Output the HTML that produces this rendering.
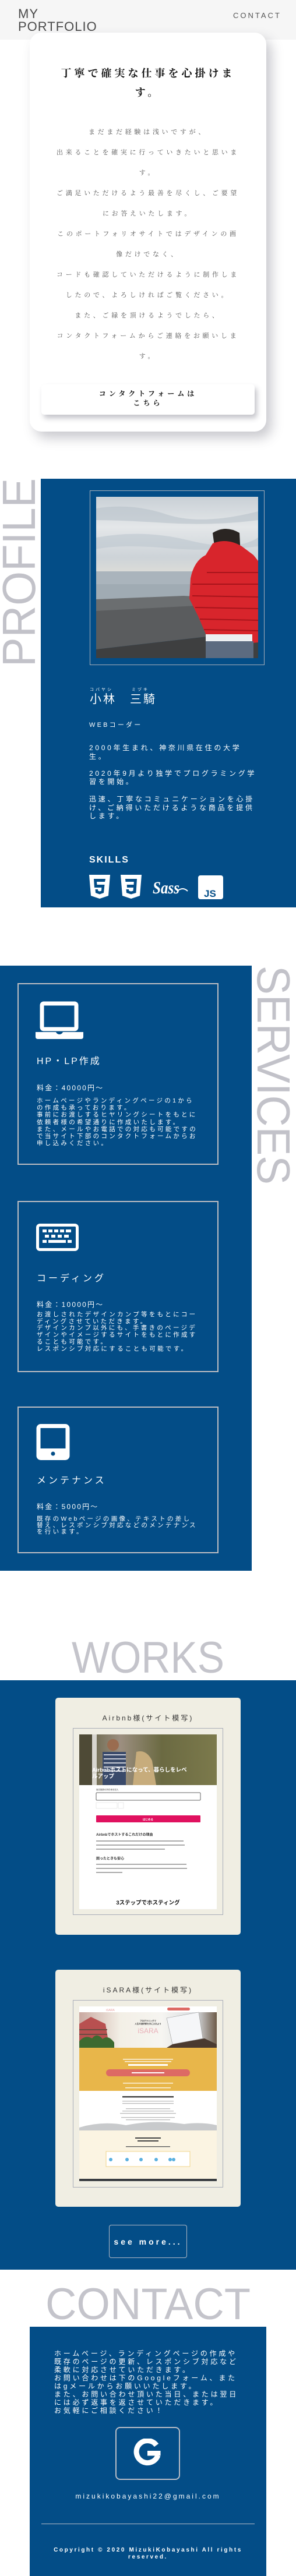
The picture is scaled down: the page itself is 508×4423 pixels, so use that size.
<!DOCTYPE html>
<html><head><meta charset="utf-8">
<style>
*{margin:0;padding:0;box-sizing:border-box}
html,body{width:508px;height:4423px;background:#fff;overflow:hidden}
body{position:relative;font-family:"Liberation Sans","Noto Sans CJK JP",sans-serif}
.a{position:absolute}
.nw{white-space:nowrap}
.serif{font-family:"Liberation Serif","Noto Serif CJK JP",serif}
.w{color:#fff}
.blue{background:#034d87}
.card{border:2px solid #bdbdc2}
</style></head><body>

<!-- HEADER -->
<div class="a" style="left:0;top:0;width:508px;height:68px;background:#f6f6f6"></div>
<div class="a nw" style="left:31px;top:13px;font-size:22px;line-height:22px;letter-spacing:1px;color:#4a4a4a">MY<br>PORTFOLIO</div>
<div class="a nw" style="left:400px;top:19px;font-size:13px;line-height:16px;letter-spacing:3px;color:#555">CONTACT</div>

<!-- INTRO CARD -->
<div class="a" style="left:51px;top:56px;width:406px;height:685px;background:#fff;border-radius:20px;box-shadow:9px 11px 20px rgba(60,60,80,0.28)"></div>
<div class="a nw serif" style="left:51px;width:406px;top:110px;text-align:center;font-size:18px;font-weight:bold;line-height:33px;letter-spacing:5px;color:#111">丁寧で確実な仕事を心掛けま<br>す。</div>
<div class="a nw serif" style="left:51px;width:406px;top:209.5px;text-align:center;font-size:11px;line-height:35px;letter-spacing:4.7px;color:#555">まだまだ経験は浅いですが、<br>出来ることを確実に行っていきたいと思いま<br>す。<br>ご満足いただけるよう最善を尽くし、ご要望<br>にお答えいたします。<br>このポートフォリオサイトではデザインの画<br>像だけでなく、<br>コードも確認していただけるように制作しま<br>したので、よろしければご覧ください。<br>また、ご縁を頂けるようでしたら、<br>コンタクトフォームからご連絡をお願いしま<br>す。</div>
<div class="a" style="left:71px;top:660px;width:366px;height:52px;background:#fff;border-radius:5px;box-shadow:4px 6px 9px rgba(60,60,80,0.3)"></div>
<div class="a nw serif" style="left:71px;width:366px;top:668px;text-align:center;font-size:12px;line-height:16px;letter-spacing:5px;color:#111;font-weight:bold">コンタクトフォームは<br>こちら</div>

<!-- PROFILE -->
<svg class="a" style="left:0;top:0" width="508" height="4423">
<text transform="translate(60,1145) rotate(-90)" font-family="Liberation Sans" font-size="80" fill="#c2c2c9" textLength="324" lengthAdjust="spacingAndGlyphs">PROFILE</text>
<text transform="translate(442,1658) rotate(90)" font-family="Liberation Sans" font-size="80" fill="#c2c2c9" textLength="376" lengthAdjust="spacingAndGlyphs">SERVICES</text>
<text x="123" y="2872" font-family="Liberation Sans" font-size="76" fill="#c4c4cb" textLength="262" lengthAdjust="spacingAndGlyphs">WORKS</text>
<text x="78" y="3982" font-family="Liberation Sans" font-size="76" fill="#c4c4cb" textLength="352" lengthAdjust="spacingAndGlyphs">CONTACT</text>
</svg>
<div class="a blue" style="left:70px;top:822px;width:438px;height:736px"></div>
<div class="a" style="left:154px;top:842px;width:300px;height:300px;border:1px solid #a9b0ba"></div>
<svg class="a" style="left:165px;top:853px" width="278" height="277" viewBox="0 0 278 277">
<defs><linearGradient id="sky" x1="0" y1="0" x2="0" y2="1"><stop offset="0" stop-color="#c9d0d6"/><stop offset="0.4" stop-color="#e4e7e9"/><stop offset="0.8" stop-color="#cdd3d8"/><stop offset="1" stop-color="#dcdcd8"/></linearGradient></defs>
<rect width="278" height="130" fill="url(#sky)"/>
<path d="M0 20 Q60 10 120 30 T278 25 L278 40 Q200 50 120 45 T0 40Z" fill="#b7c1ca" opacity="0.6"/>
<path d="M0 70 Q80 55 160 75 T278 70 L278 85 Q200 95 120 88 T0 90Z" fill="#bcc6ce" opacity="0.6"/>
<rect y="128" width="278" height="52" fill="#aab4bc"/>
<rect y="150" width="278" height="30" fill="#9aa5ae" opacity="0.6"/>
<path d="M0 186 L150 176 L278 178 L278 230 L0 262Z" fill="#5a5c5e"/>
<path d="M0 176 L150 170 L190 172 L190 186 L0 196Z" fill="#6b6e70"/>
<path d="M0 262 L278 230 L278 277 L0 277Z" fill="#3e3f40"/>
<path d="M200 62 Q222 48 246 62 L248 100 L205 100Z" fill="#2a2522"/>
<path d="M162 140 Q168 110 188 100 L200 80 Q225 70 250 85 L270 100 L278 110 L278 250 L230 255 L190 240 L175 205 L160 175Z" fill="#d8252c"/>
<path d="M165 150 L278 150 M165 170 L278 172 M170 190 L278 192 M178 210 L278 212 M185 228 L278 230 M190 130 L278 130" stroke="#a8141b" stroke-width="2" fill="none"/>
<rect x="188" y="236" width="80" height="12" fill="#eceff2"/>
<rect x="188" y="248" width="82" height="29" fill="#5c6b80"/>
</svg>
<div class="a nw w" style="left:154px;top:1180px;font-size:7px;line-height:10px;letter-spacing:3px">コバヤシ</div>
<div class="a nw w" style="left:226px;top:1180px;font-size:7px;line-height:10px;letter-spacing:3px">ミヅキ</div>
<div class="a nw w" style="left:154px;top:1189px;font-size:20px;line-height:24px;letter-spacing:3px">小林　三騎</div>
<div class="a nw w" style="left:153px;top:1238px;font-size:11px;line-height:14px;letter-spacing:3.2px">WEBコーダー</div>
<div class="a nw w" style="left:153px;top:1277px;font-size:12px;line-height:14.5px;letter-spacing:3.7px">2000年生まれ、神奈川県在住の大学<br>生。</div>
<div class="a nw w" style="left:153px;top:1321px;font-size:12px;line-height:14px;letter-spacing:3.7px">2020年9月より独学でプログラミング学<br>習を開始。</div>
<div class="a nw w" style="left:153px;top:1365px;font-size:12px;line-height:14.5px;letter-spacing:3.8px">迅速、丁寧なコミュニケーションを心掛<br>け、ご納得いただけるような商品を提供<br>します。</div>
<div class="a nw w" style="left:153px;top:1467px;font-size:16px;line-height:20px;letter-spacing:2px;font-weight:bold">SKILLS</div>
<svg class="a" style="left:150px;top:1500px" width="240" height="50" viewBox="0 0 240 50">
<path d="M3 2 H39 L36 38 L21 43 L6 38Z" fill="#fff"/>
<path d="M11 9 H31 L30 14 H16 L16.5 19 H29.5 L28 33 L21 35.5 L14 33 L13.5 27 H18 L18.3 29.5 L21 30.5 L24 29.5 L24.4 24 H12Z" fill="#034d87"/>
<path d="M57 2 H93 L90 38 L75 43 L60 38Z" fill="#fff"/>
<path d="M65 9 H85 L83.5 33 L75 35.5 L67 33 L66.5 27 H71 L71.3 29.5 L75 30.5 L78.5 29.5 L79 24 H68 L67.7 19 H79.5 L79.8 14 H65.5Z" fill="#034d87"/>
<text x="112" y="34" font-family="Liberation Serif" font-style="italic" font-weight="bold" font-size="30" fill="#fff" textLength="46" lengthAdjust="spacingAndGlyphs">Sass</text>
<path d="M154 30 Q164 22 172 30" stroke="#fff" stroke-width="2" fill="none"/>
<rect x="190" y="3" width="43" height="41" rx="4" fill="#fff"/>
<text x="200" y="40" font-family="Liberation Sans" font-weight="bold" font-size="17" fill="#034d87">JS</text>
</svg>

<!-- SERVICES -->
<div class="a blue" style="left:0;top:1658px;width:432px;height:1039px"></div>
<div class="a card" style="left:30px;top:1688px;width:345px;height:312px"></div>
<div class="a card" style="left:30px;top:2062px;width:345px;height:294px"></div>
<div class="a card" style="left:30px;top:2415px;width:345px;height:252px"></div>
<svg class="a" style="left:60px;top:1718px" width="86" height="70">
<rect x="12" y="5" width="59" height="44" rx="3" fill="none" stroke="#fff" stroke-width="7"/>
<path d="M1 54 H36 Q38 58 42 58 Q46 58 48 54 H83 V62 Q83 66 79 66 H5 Q1 66 1 62Z" fill="#fff"/>
</svg>
<svg class="a" style="left:60px;top:2099px" width="78" height="52">
<rect x="4.5" y="4.5" width="68" height="42" rx="4" fill="none" stroke="#fff" stroke-width="5"/>
<g fill="#fff"><rect x="13" y="12" width="7" height="5"/><rect x="23" y="12" width="7" height="5"/><rect x="33" y="12" width="7" height="5"/><rect x="43" y="12" width="7" height="5"/><rect x="53" y="12" width="9" height="5"/>
<rect x="17" y="21" width="7" height="5"/><rect x="28" y="21" width="7" height="5"/><rect x="39" y="21" width="7" height="5"/><rect x="50" y="21" width="8" height="5"/>
<rect x="13" y="30" width="7" height="5"/><rect x="23" y="30" width="30" height="5"/><rect x="56" y="30" width="7" height="5"/></g>
</svg>
<svg class="a" style="left:60px;top:2443px" width="62" height="66">
<rect x="6" y="5.5" width="50" height="55" rx="4" fill="none" stroke="#fff" stroke-width="7"/>
<rect x="6" y="44" width="50" height="17" rx="3" fill="#fff"/>
<circle cx="31" cy="53" r="3.5" fill="#034d87"/>
</svg>

<div class="a nw w" style="left:63px;top:1812px;font-size:16px;line-height:22px;letter-spacing:3px">HP・LP作成</div>
<div class="a nw w" style="left:63px;top:1860px;font-size:12px;line-height:16px;letter-spacing:2.2px">料金：40000円〜</div>
<div class="a nw w" style="left:63px;top:1884px;font-size:10.5px;line-height:12.2px;letter-spacing:3.3px">ホームページやランディングページの1から<br>の作成も承っております。<br>事前にお渡しするヒヤリングシートをもとに<br>依頼者様の希望通りに作成いたします。<br>また、メールやお電話での対応も可能ですの<br>で当サイト下部のコンタクトフォームからお<br>申し込みください。</div>

<div class="a nw w" style="left:63px;top:2185px;font-size:16px;line-height:22px;letter-spacing:4px">コーディング</div>
<div class="a nw w" style="left:63px;top:2232px;font-size:12px;line-height:16px;letter-spacing:2.2px">料金：10000円〜</div>
<div class="a nw w" style="left:63px;top:2252px;font-size:10.5px;line-height:11.7px;letter-spacing:3.3px">お渡しされたデザインカンプ等をもとにコー<br>ディングさせていただきます。<br>デザインカンプ以外にも、手書きのページデ<br>ザインやイメージするサイトをもとに作成す<br>ることも可能です。<br>レスポンシブ対応にすることも可能です。</div>

<div class="a nw w" style="left:63px;top:2532px;font-size:16px;line-height:22px;letter-spacing:4px">メンテナンス</div>
<div class="a nw w" style="left:63px;top:2579px;font-size:12px;line-height:16px;letter-spacing:2.2px">料金：5000円〜</div>
<div class="a nw w" style="left:63px;top:2603px;font-size:10.5px;line-height:11px;letter-spacing:3.3px">既存のWebページの画像、テキストの差し<br>替え、レスポンシブ対応などのメンテナンス<br>を行います。</div>

<!-- WORKS -->
<div class="a blue" style="left:0;top:2885px;width:508px;height:1012px"></div>
<div class="a" style="left:95px;top:2915px;width:318px;height:407px;background:#f0eee3;border-radius:5px"></div>
<div class="a nw" style="left:95px;width:318px;top:2942px;text-align:center;font-size:12px;line-height:16px;letter-spacing:3px;color:#333">Airbnb様(サイト模写)</div>
<div class="a" style="left:125px;top:2967px;width:258px;height:321px;border:1px solid #a9adb8"></div>
<svg class="a" style="left:136px;top:2978px" width="236" height="300" viewBox="0 0 236 300">
<defs><linearGradient id="ph" x1="0" y1="0" x2="1" y2="0"><stop offset="0" stop-color="#5a5a3c"/><stop offset="0.3" stop-color="#9c8f80"/><stop offset="0.6" stop-color="#6b6a42"/><stop offset="1" stop-color="#7c7a4c"/></linearGradient></defs>
<rect width="236" height="300" fill="#fff"/>
<rect width="236" height="87" fill="url(#ph)"/>
<rect x="0" y="0" width="22" height="87" fill="#4e4a36"/>
<rect x="22" y="0" width="8" height="87" fill="#d8d6d0"/>
<rect x="40" y="30" width="40" height="57" fill="#3a4a6a"/>
<path d="M42 35 H80 M42 42 H80 M42 49 H80 M42 56 H80 M42 63 H80" stroke="#c8ccd6" stroke-width="2"/>
<circle cx="58" cy="18" r="10" fill="#9a6c50"/>
<path d="M98 30 Q115 25 125 45 L132 87 H92Z" fill="#c7ac7c"/>
<text x="22" y="64" font-family="Liberation Sans, Noto Sans CJK JP, sans-serif" font-weight="bold" font-size="9.5" fill="#fff">Airbnbホストになって、暮らしをレベ</text>
<text x="22" y="75" font-family="Liberation Sans, Noto Sans CJK JP, sans-serif" font-weight="bold" font-size="9.5" fill="#fff">ルアップ</text>
<text x="29" y="96" font-family="Noto Sans CJK JP, sans-serif" font-size="3.5" fill="#444">宿泊施設の所在地を記入</text>
<rect x="29" y="100" width="179" height="13" rx="1.5" fill="#fff" stroke="#666" stroke-width="1"/>
<rect x="29" y="117" width="36" height="10" fill="#fff" stroke="#ddd" stroke-width="0.6"/>
<rect x="67" y="117" width="9" height="10" fill="#fff" stroke="#ddd" stroke-width="0.6"/>
<rect x="29" y="139" width="179" height="12" rx="1" fill="#e0115f"/>
<text x="118" y="147.5" text-anchor="middle" font-family="Noto Sans CJK JP, sans-serif" font-weight="bold" font-size="4.5" fill="#fff">はじめる</text>
<text x="29" y="174" font-family="Liberation Sans, Noto Sans CJK JP, sans-serif" font-weight="bold" font-size="6" fill="#333">Airbnbでホストするこれだけの理由</text>
<g fill="#aaa"><rect x="29" y="182" width="150" height="2"/><rect x="29" y="189" width="152" height="2"/><rect x="29" y="196" width="118" height="2"/></g>
<text x="29" y="215" font-family="Noto Sans CJK JP, sans-serif" font-weight="bold" font-size="6" fill="#333">困ったときも安心</text>
<g fill="#aaa"><rect x="29" y="222" width="155" height="2"/><rect x="29" y="229" width="156" height="2"/><rect x="29" y="236" width="45" height="2"/></g>
<text x="118" y="292" text-anchor="middle" font-family="Liberation Sans, Noto Sans CJK JP, sans-serif" font-weight="bold" font-size="9.5" fill="#111">3ステップでホスティング</text>
</svg>

<div class="a" style="left:95px;top:3382px;width:318px;height:407px;background:#f0eee3;border-radius:5px"></div>
<div class="a nw" style="left:95px;width:318px;top:3409px;text-align:center;font-size:12px;line-height:16px;letter-spacing:3px;color:#333">iSARA様(サイト模写)</div>
<div class="a" style="left:125px;top:3434px;width:258px;height:322px;border:1px solid #a9adb8"></div>
<svg class="a" style="left:136px;top:3445px" width="236" height="300" viewBox="0 0 236 300">
<defs><linearGradient id="hero" x1="0" y1="0" x2="1" y2="0"><stop offset="0" stop-color="#c9a8a0"/><stop offset="0.3" stop-color="#f3efe6"/><stop offset="0.6" stop-color="#f6f5f1"/><stop offset="0.85" stop-color="#d8dce0"/><stop offset="1" stop-color="#6c5a48"/></linearGradient></defs>
<rect width="236" height="300" fill="#fff"/>
<text x="46" y="8" font-family="Liberation Sans" font-size="5" fill="#e8a0a0">iSARA</text>
<rect x="151" y="2" width="39" height="5" rx="2.5" fill="#dd6a64"/>
<rect y="10" width="236" height="61" fill="url(#hero)"/>
<path d="M0 30 L20 18 L45 30 L50 60 L0 60Z" fill="#b85050"/>
<path d="M0 40 H48 M0 48 H48" stroke="#6a4b40" stroke-width="2"/>
<path d="M0 60 Q10 48 22 55 Q30 44 40 56 Q50 48 60 62 L60 71 H0Z" fill="#3d6a30"/>
<path d="M150 20 L205 10 L212 55 L160 65Z" fill="#f5f6f8" stroke="#999" stroke-width="0.6"/>
<path d="M160 65 L215 55 L236 65 L236 71 H150Z" fill="#4a3a30"/>
<text x="118" y="26" text-anchor="middle" font-family="Noto Sans CJK JP" font-size="3.5" font-weight="bold" fill="#333">プログラミングで</text>
<text x="118" y="31" text-anchor="middle" font-family="Noto Sans CJK JP" font-size="3.5" font-weight="bold" fill="#333">人生の選択肢を手に入れよう</text>
<text x="118" y="46" text-anchor="middle" font-family="Liberation Sans" font-size="12" fill="#e9b0b8">iSARA</text>
<rect y="71" width="236" height="74" fill="#e8b64a"/>
<rect x="84" y="99" width="68" height="3" fill="#fff"/>
<rect x="46" y="96" width="0" height="0"/>
<rect x="46" y="108" width="144" height="12" rx="6" fill="#dd6a64"/>
<rect x="90" y="113" width="56" height="2" fill="#fff"/>
<g fill="#fff" opacity="0.85"><rect x="75" y="90" width="86" height="1.5"/><rect x="78" y="94" width="80" height="1.5"/><rect x="75" y="131" width="86" height="1.5"/><rect x="79" y="139" width="78" height="1.5"/></g>
<rect y="145" width="236" height="63" fill="#fff"/>
<rect x="74" y="154" width="88" height="2.5" fill="#444"/>
<g fill="#bbb"><rect x="74" y="162" width="88" height="1.3"/><rect x="74" y="166" width="88" height="1.3"/><rect x="80" y="175" width="76" height="1.3"/><rect x="74" y="179" width="88" height="1.3"/><rect x="70" y="183" width="96" height="1.3"/><rect x="72" y="190" width="92" height="1.3"/><rect x="80" y="194" width="76" height="1.3"/></g>
<path d="M0 208 Q40 196 80 204 Q130 194 180 202 Q210 198 236 204 L236 213 H0Z" fill="#c8cacc"/>
<rect y="213" width="236" height="83" fill="#fbf4e2"/>
<rect x="96" y="225" width="44" height="2" fill="#444"/>
<rect x="100" y="230" width="36" height="2" fill="#444"/>
<rect x="80" y="240" width="76" height="1.5" fill="#666"/>
<rect x="46" y="249" width="144" height="26" fill="#fff" stroke="#f0d58a" stroke-width="1"/>
<g fill="#5ab0e0"><circle cx="54" cy="263" r="3"/><circle cx="82" cy="263" r="3"/><circle cx="106" cy="263" r="3"/><circle cx="132" cy="263" r="3"/><circle cx="156" cy="263" r="3"/><circle cx="162" cy="263" r="3"/></g>
<rect y="296" width="236" height="4" fill="#3a3d42"/>
</svg>

<div class="a" style="left:187px;top:3820px;width:134px;height:57px;border:1px solid #b3b8c4;border-radius:4px"></div>
<div class="a nw w" style="left:187px;width:134px;top:3840px;text-align:center;font-size:14px;line-height:18px;letter-spacing:4px;font-weight:bold">see more...</div>

<!-- CONTACT -->
<div class="a blue" style="left:51px;top:3995px;width:406px;height:428px"></div>
<div class="a nw w" style="left:93px;top:4034px;font-size:12px;line-height:14px;letter-spacing:3.8px">ホームページ、ランディングページの作成や<br>既存のページの更新、レスポンシブ対応など<br>柔軟に対応させていただきます。<br>お問い合わせは下のGoogleフォーム、また<br>はgメールからお願いいたします。<br>また、お問い合わせ頂いた当日、または翌日<br>には必ず返事を返させていただきます。<br>お気軽にご相談ください！</div>
<div class="a" style="left:198px;top:4167px;width:111px;height:91px;border:2px solid #b8bcc6;border-radius:8px"></div>
<svg class="a" style="left:228px;top:4187px" width="50" height="50" viewBox="0 0 50 50">
<path d="M40.5 11.5 A19 19 0 1 0 43 29" fill="none" stroke="#fff" stroke-width="9"/>
<rect x="25" y="21" width="22.5" height="8.5" fill="#fff"/>
</svg>
<div class="a nw w" style="left:51px;width:406px;top:4278px;text-align:center;font-size:12px;line-height:16px;letter-spacing:3px">mizukikobayashi22@gmail.com</div>
<div class="a" style="left:71px;top:4333px;width:366px;height:1px;background:#b8bcc6"></div>
<div class="a nw w" style="left:51px;width:406px;top:4373px;text-align:center;font-size:10px;line-height:12px;letter-spacing:2.6px;font-weight:bold">Copyright © 2020 MizukiKobayashi All rights<br>reserved.</div>

</body></html>
